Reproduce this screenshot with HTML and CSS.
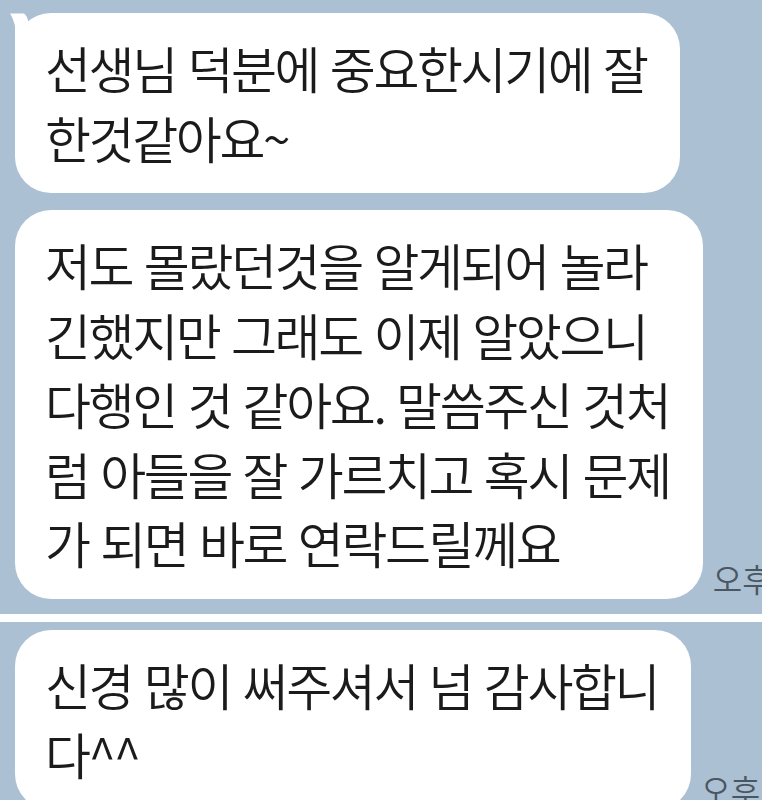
FILE: index.html
```html
<!DOCTYPE html>
<html lang="ko">
<head>
<meta charset="utf-8">
<title>대화</title>
<link rel="stylesheet" href="styles.css">
</head>
<body>
<div class="chat">
  <div class="row">
    <div class="bubble has-tail">
      <svg class="tail" width="30" height="45" viewBox="0 0 30 45" aria-hidden="true">
        <path d="M1 0.5 L15 0.5 Q18 2 20 11 L6 37 L6 13 Q4 5 1 0.5 Z" fill="#ffffff"/>
      </svg>
      <p class="msg">선생님 덕분에 중요한시기에 잘<br>한것같아요~</p>
    </div>
  </div>
  <div class="row">
    <div class="bubble">
      <p class="msg">저도 몰랐던것을 알게되어 놀라<br>긴했지만 그래도 이제 알았으니<br>다행인 것 같아요. 말씀주신 것처<br>럼 아들을 잘 가르치고 혹시 문제<br>가 되면 바로 연락드릴께요</p>
    </div>
    <span class="time">오후 3:12</span>
  </div>
  <div class="divider"></div>
  <div class="row">
    <div class="bubble">
      <p class="msg">신경 많이 써주셔서 넘 감사합니<br>다^^</p>
    </div>
    <span class="time">오후 3:13</span>
  </div>
</div>
</body>
</html>
```

FILE: styles.css
```css
html, body {
  margin: 0;
  padding: 0;
  background: #abc0d2;
  overflow: hidden;
  width: 762px;
  height: 800px;
}

.chat {
  padding: 13px 0 0 15px;
  display: flex;
  flex-direction: column;
  gap: 17px;
  overflow: hidden;
  font-family: "Noto Sans CJK KR", "Noto Sans", sans-serif;
}

.row {
  display: flex;
  align-items: flex-end;
  gap: 10px;
  white-space: nowrap;
  overflow: hidden;
}

.bubble {
  position: relative;
  flex-shrink: 0;
  background: #ffffff;
  border-radius: 36px;
  padding: 20px 33px 21px 30px;
}

.has-tail {
  overflow: visible;
}

.row:first-child {
  overflow: visible;
}

.tail {
  position: absolute;
  left: -6px;
  top: 0;
  overflow: visible;
}

.msg {
  margin: 0;
  font-size: 50px;
  font-weight: 350;
  line-height: 69.5px;
  letter-spacing: -2.4px;
  color: #1b1b1b;
}

.time {
  flex-shrink: 0;
  font-size: 32px;
  font-weight: 350;
  line-height: 1;
  color: #4a5662;
  margin-bottom: 5px;
}

.divider {
  height: 8px;
  background: #ffffff;
  margin: -2px 0 -9px -15px;
}
```
